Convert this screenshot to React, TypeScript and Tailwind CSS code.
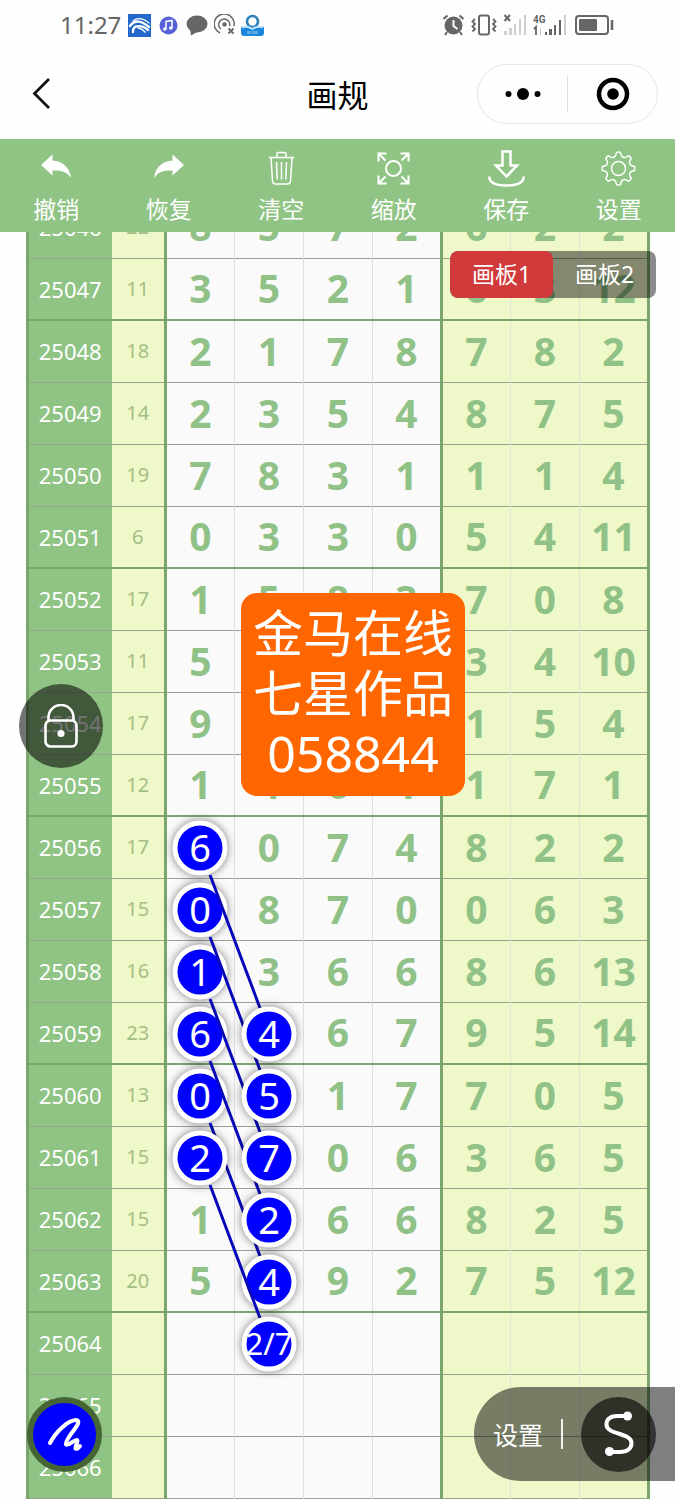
import type { ReactNode } from 'react';

/**
 * Trend chart drawing board
 * ------------------------------------------------------------
 * ▸ Phone status bar + mini program title bar.
 * ▸ Green toolbar (undo, redo, clear, zoom, save, settings).
 * ▸ Draw table with the connected number marks on top.
 * ▸ Floating controls: board switch, lock, pen, line settings.
 */

interface Draw {
  issue: string;
  sum: string;
  main: string[];
  extra: string[];
}

const draws: Draw[] = [
  { issue: '25046', sum: '22', main: ['8', '5', '7', '2'], extra: ['6', '2', '2'] },
  { issue: '25047', sum: '11', main: ['3', '5', '2', '1'], extra: ['6', '3', '12'] },
  { issue: '25048', sum: '18', main: ['2', '1', '7', '8'], extra: ['7', '8', '2'] },
  { issue: '25049', sum: '14', main: ['2', '3', '5', '4'], extra: ['8', '7', '5'] },
  { issue: '25050', sum: '19', main: ['7', '8', '3', '1'], extra: ['1', '1', '4'] },
  { issue: '25051', sum: '6', main: ['0', '3', '3', '0'], extra: ['5', '4', '11'] },
  { issue: '25052', sum: '17', main: ['1', '5', '8', '3'], extra: ['7', '0', '8'] },
  { issue: '25053', sum: '11', main: ['5', '2', '1', '3'], extra: ['3', '4', '10'] },
  { issue: '25054', sum: '17', main: ['9', '4', '2', '2'], extra: ['1', '5', '4'] },
  { issue: '25055', sum: '12', main: ['1', '4', '6', '1'], extra: ['1', '7', '1'] },
  { issue: '25056', sum: '17', main: ['6', '0', '7', '4'], extra: ['8', '2', '2'] },
  { issue: '25057', sum: '15', main: ['0', '8', '7', '0'], extra: ['0', '6', '3'] },
  { issue: '25058', sum: '16', main: ['1', '3', '6', '6'], extra: ['8', '6', '13'] },
  { issue: '25059', sum: '23', main: ['6', '4', '6', '7'], extra: ['9', '5', '14'] },
  { issue: '25060', sum: '13', main: ['0', '5', '1', '7'], extra: ['7', '0', '5'] },
  { issue: '25061', sum: '15', main: ['2', '7', '0', '6'], extra: ['3', '6', '5'] },
  { issue: '25062', sum: '15', main: ['1', '2', '6', '6'], extra: ['8', '2', '5'] },
  { issue: '25063', sum: '20', main: ['5', '4', '9', '2'], extra: ['7', '5', '12'] },
  { issue: '25064', sum: '', main: ['', '', '', ''], extra: ['', '', ''] },
  { issue: '25065', sum: '', main: ['', '', '', ''], extra: ['', '', ''] },
  { issue: '25066', sum: '', main: ['', '', '', ''], extra: ['', '', ''] },
];

// Rows that close a group get the heavy rule
const groupEnds = ['25047', '25051', '25055', '25059', '25063'];

// These cells are covered by a mark, the mark carries the number
const markedCells = [
  '25056-0', '25057-0', '25058-0', '25059-0', '25060-0', '25061-0',
  '25059-1', '25060-1', '25061-1', '25062-1', '25063-1',
];

export default function DrawingBoard() {
  return (
    <div className="relative min-h-screen overflow-hidden bg-[#fefefe] font-['Noto_Sans','Noto_Sans_CJK_SC',sans-serif]">
      <StatusBar />
      <TitleBar />
      <Toolbar />

      {/* Chart */}
      <main className="overflow-hidden">
        <div className="relative -mt-9 ml-[26px] mr-[25px]">
          <DrawTable />
          <Marks />
          <p className="absolute left-[215px] top-[397px] rounded-2xl bg-[#ff6600] px-3 pt-[10px] pb-[13px] text-center text-[50px] leading-[60px] text-white">
            金马在线
            <br />
            七星作品
            <br />
            058844
          </p>
        </div>
      </main>

      {/* Floating controls */}
      <div className="absolute right-[19px] top-[251px] z-20 flex h-[47px] overflow-hidden rounded-lg bg-black/45 text-[23px] text-white">
        <button className="w-[103px] rounded-lg bg-[#d03a3a]">画板1</button>
        <button className="w-[103px]">画板2</button>
      </div>
      <button
        aria-label="锁定"
        className="absolute left-[19px] top-[684px] flex h-[84px] w-[84px] items-center justify-center rounded-full bg-black/55"
      >
        <svg width="34" height="44" viewBox="0 0 34 44" fill="none" stroke="#fff" strokeWidth="2.6">
          <rect x="1.500" y="16.500" width="31" height="26" rx="5" />
          <path d="M4.500 16.500v-3a12.500 12.500 0 0 1 25 0v3" />
          <circle cx="17" cy="29.500" r="3.600" fill="#fff" stroke="none" />
        </svg>
      </button>
      <button
        aria-label="画笔"
        className="absolute left-[27px] top-[1397px] flex h-[75px] w-[75px] items-center justify-center rounded-full border-[6px] border-[#456535] bg-[#0000ff]"
      >
        <svg width="36" height="36" viewBox="0 0 36 36" fill="none" stroke="#fff" strokeWidth="4" strokeLinecap="round" strokeLinejoin="round">
          <path d="M3 26C8 16 20 3.500 29 3c6 .5-1 8.500-5 14-3.500 5-6 9-5 10.500 2 2 9-5.500 11-4.500 2 1.200-2 5-1.500 8.500 1.500 1 3-.5 4.500-2.500" />
        </svg>
      </button>
      <div className="absolute right-0 top-[1387px] flex h-[94px] items-center rounded-l-full bg-black/50 px-[19px] text-white">
        <button className="pt-1 text-[25px]">设置</button>
        <span className="mx-[18px] h-[30px] w-[2px] bg-white/90" />
        <button aria-label="曲线" className="flex h-[75px] w-[75px] items-center justify-center rounded-full bg-black/60">
          <svg width="32" height="46" viewBox="0 0 32 46" fill="none" stroke="#fff" strokeWidth="4">
            <path d="M24 5H14C6.500 5 3.500 9 3.500 13.500c0 10.500 25 8 25 18.500 0 6-4.500 9-11.500 9H6" />
            <circle cx="24.500" cy="5" r="4.500" fill="#fff" stroke="none" />
            <circle cx="6.500" cy="40.500" r="4.500" fill="#fff" stroke="none" />
          </svg>
        </button>
      </div>
    </div>
  );
}

/* ✦ Phone status bar */
function StatusBar() {
  return (
    <header className="flex h-[50px] items-center justify-between px-[60px] text-[#666]">
      <div className="flex items-center">
        <span className="mr-[7px] text-2xl leading-none">11:27</span>
        <svg width="23" height="23" viewBox="0 0 23 23">
          <rect width="23" height="23" fill="#2468cc" />
          <g fill="none" stroke="#fff" strokeLinecap="round">
            <path d="M5 7C10 3 16 5 21 9" strokeWidth="1.200" />
            <path d="M2 12C7 5 14 7 21 13" strokeWidth="2.400" />
            <path d="M5 18c-1-8 10-7 15-2" strokeWidth="2.400" />
            <path d="M10 14c3 0 5 2 7 4" strokeWidth="1.600" />
          </g>
        </svg>
        <svg className="ml-2" width="19" height="19" viewBox="0 0 19 19">
          <circle cx="9.500" cy="9.500" r="9" fill="#5660d8" />
          <path d="M7 13V5.500l6-1V12" fill="none" stroke="#fff" strokeWidth="1.500" />
          <circle cx="5.800" cy="13" r="1.800" fill="#fff" />
          <circle cx="11.800" cy="12" r="1.800" fill="#fff" />
        </svg>
        <svg className="ml-2" width="22" height="21" viewBox="0 0 22 21" fill="#666">
          <ellipse cx="11" cy="9" rx="10.500" ry="8.500" />
          <path d="M4 14l1 6.500 7-4z" />
        </svg>
        <svg className="ml-[6px]" width="22" height="22" viewBox="0 0 22 22" fill="none" stroke="#666" strokeWidth="1.500">
          <path d="M6 19A10 10 0 1 1 20 12M7 15A5.500 5.500 0 1 1 15.500 12" />
          <circle cx="10.500" cy="10.500" r="2.200" fill="#666" stroke="none" />
          <path d="M14.500 14.500l5 5m0-5l-5 5" strokeWidth="1.800" />
        </svg>
        <svg className="ml-[5px]" width="23" height="22" viewBox="0 0 23 22">
          <path d="M0 13l3-1h17l3 1v6q0 3-3 3H3q-3 0-3-3z" fill="#1b86dc" />
          <circle cx="11.500" cy="7.500" r="5.500" fill="#fff" stroke="#2d7fb8" strokeWidth="2.600" />
          <path d="M1 13.500q5-2 10.500 1.500Q17 11.500 22 13.500" fill="none" stroke="#bfe6ff" strokeWidth="2" />
          <path d="M7 17v3m2-3v3m3-3v3m2-3v3m2-3v3" stroke="#9fd4ff" />
        </svg>
      </div>

      <div className="flex items-center">
        <svg width="23" height="22" viewBox="0 0 23 22" fill="none" stroke="#666">
          <circle cx="11.500" cy="11.500" r="9" fill="#666" stroke="none" />
          <path d="M1.500 5l4-3.500m16 3.500l-4-3.500" strokeWidth="2.200" />
          <path d="M5 18l-2 3m15-3l2 3" strokeWidth="2" />
          <path d="M11.500 6v6l4 3" stroke="#fff" strokeWidth="2" />
        </svg>
        <svg className="ml-[6px]" width="26" height="22" viewBox="0 0 26 22" fill="none" stroke="#666" strokeWidth="2">
          <rect x="8" y="1.500" width="10" height="19" rx="2" />
          <path d="M4 5L1.500 7.500 4 10 1.500 12.500 4 15l-2.500 2.500M22 5l2.500 2.500L22 10l2.500 2.500L22 15l2.500 2.500" strokeWidth="1.800" />
        </svg>
        <svg className="ml-[6px]" width="24" height="22" viewBox="0 0 24 22" fill="#cfcfcf">
          <path d="M1 17h3v4H1zM6 14h3v7H6zM11 10h2v11h-2zM16 5h2v16h-2zM21 1h2v20h-2z" />
          <path d="M1.500 1l5.500 6m0-6L1.500 7" fill="none" stroke="#666" strokeWidth="2" />
        </svg>
        <svg className="ml-[6px]" width="34" height="22" viewBox="0 0 34 22" fill="#666">
          <text x="0" y="9" fontSize="10" fontWeight="700" fontFamily="Roboto, sans-serif">4G</text>
          <path d="M3 21v-8l-2 2" fill="none" stroke="#666" strokeWidth="1.800" />
          <path d="M12 18h2v3h-2zM16 15h3v6h-3zM21 11h2v10h-2zM26 6h2v15h-2z" />
          <path d="M31 1h2v20h-2zM7 14h1v7H7z" fill="#cfcfcf" />
        </svg>
        <svg className="ml-[7px]" width="41" height="22" viewBox="0 0 41 22">
          <rect x="2" y="2" width="32" height="18" rx="3" fill="none" stroke="#666" strokeWidth="2" />
          <rect x="5" y="5" width="18" height="12" rx="1" fill="#666" />
          <path d="M38 6v10" stroke="#666" strokeWidth="2.500" />
        </svg>
      </div>
    </header>
  );
}

/* ✦ Title with back button and the mini program capsule */
function TitleBar() {
  return (
    <nav className="grid h-[89px] grid-cols-[1fr_auto_1fr] items-center px-[17px] pb-[2px]">
      <button aria-label="返回" className="w-fit pl-[14px]">
        <svg width="20" height="34" viewBox="0 0 20 34" fill="none" stroke="#111" strokeWidth="2.800">
          <path d="M18 2L3.500 16.500 18 31" />
        </svg>
      </button>
      <h1 className="pt-1 text-[31px] leading-none text-black">画规</h1>
      <div className="flex h-[60px] w-[181px] items-center justify-self-end rounded-full border border-[#e6e6e6]">
        <button aria-label="更多" className="flex flex-1 items-center justify-center">
          <svg width="38" height="14" viewBox="0 0 38 14">
            <circle cx="4.500" cy="7" r="3" />
            <circle cx="19" cy="7" r="6" />
            <circle cx="33.500" cy="7" r="3" />
          </svg>
        </button>
        <span className="h-9 w-px bg-[#e0e0e0]" />
        <button aria-label="关闭" className="flex flex-1 items-center justify-center">
          <svg width="34" height="34" viewBox="0 0 34 34">
            <circle cx="17" cy="17" r="14" fill="none" stroke="#000" strokeWidth="4.500" />
            <circle cx="17" cy="17" r="5.800" />
          </svg>
        </button>
      </div>
    </nav>
  );
}

/* ✦ Green toolbar */
function Toolbar() {
  return (
    <div className="relative z-10 grid h-[93px] grid-cols-6 bg-[#90c484] text-white">
      <Tool label="撤销">
        <path d="M3 15 14.500 4.500v6c9.500.5 17 6 18.500 17.500-4-6-9-8-18.500-7.500v5z" fill="#fff" stroke="none" />
      </Tool>
      <Tool label="恢复">
        <path d="M34 15 22.500 4.500v6c-9.500.5-17 6-18.500 17.500 4-6 9-8 18.500-7.500v5z" fill="#fff" stroke="none" />
      </Tool>
      <Tool label="清空">
        <path d="M6 7.500h25M14 7V3.500q0-1 1-1h7q1 0 1 1V7M8 8l1.500 23q.2 3 3 3h12q2.800 0 3-3L29 8M13.500 12l.7 17.500M18.500 12v17.500M23.500 12l-.7 17.500" strokeWidth="1.500" />
      </Tool>
      <Tool label="缩放">
        <circle cx="18.500" cy="18.500" r="7.500" />
        <path d="M10.500 10.500L3.500 3.500m0 8v-8h8M26.500 10.500l7-7m0 8v-8h-8M10.500 26.500l-7 7m0-8v8h8M26.500 26.500l7 7m0-8v8h-8" />
      </Tool>
      <Tool label="保存">
        <path d="M14.500 1.500h8v14h6.500L18.500 26.500 8 15.500h6.500z" strokeWidth="2.500" />
        <path d="M1.300 26.500c0 6.500 7 9 17.200 9s17.200-2.500 17.200-9" strokeWidth="2.500" />
      </Tool>
      <Tool label="设置">
        <path d={gearPath} strokeWidth="1.500" />
        <circle cx="18.500" cy="18.500" r="7" strokeWidth="1.500" />
      </Tool>
    </div>
  );
}

const gearPath = buildGear(8, 18.5, 16.2, 12.8);

function buildGear(teeth: number, c: number, outer: number, inner: number) {
  const point = (r: number, turn: number) => {
    const a = (turn / teeth) * Math.PI * 2 - Math.PI / 2;
    return `${(c + r * Math.cos(a)).toFixed(2)} ${(c + r * Math.sin(a)).toFixed(2)}`;
  };
  let d = `M${point(outer, -0.15)}`;
  for (let i = 0; i < teeth; i++) {
    d += `Q${point(outer + 0.6, i)} ${point(outer, i + 0.15)}`;
    d += `L${point(inner + 0.9, i + 0.25)}`;
    d += `Q${point(inner - 1.8, i + 0.5)} ${point(inner + 0.9, i + 0.75)}`;
    d += `L${point(outer, i + 0.85)}`;
  }
  return d + 'Z';
}

function Tool({ label, children }: { label: string; children: ReactNode }) {
  return (
    <button className="flex flex-col items-center gap-[6px] pt-[11px]">
      <svg width="37" height="37" viewBox="0 0 37 37" fill="none" stroke="#fff" strokeWidth="2">
        {children}
      </svg>
      <span className="text-[23px] leading-8">{label}</span>
    </button>
  );
}

/* ✦ Draw table */
function DrawTable() {
  return (
    <table className="w-full table-fixed border-collapse border-x-[3px] border-[#7aa56c] text-center">
      <colgroup>
        <col className="w-[84px]" />
        <col className="w-[54px]" />
        <col span={7} />
      </colgroup>
      <tbody>
        {draws.map((d) => (
          <tr
            key={d.issue}
            className={
              groupEnds.includes(d.issue)
                ? 'h-[62px] border-b-2 border-[#7aa56c]'
                : 'h-[62px] border-b border-[#98a390]'
            }
          >
            <th scope="row" className="bg-[#90c484] p-0 text-[22px] font-normal leading-none text-white">
              {d.issue}
            </th>
            <td className="border-r-[3px] border-r-[#7aa56c] bg-[#eef8c8] p-0 text-[20px] leading-none text-[#a5bf85]">
              {d.sum}
            </td>
            {d.main.map((n, i) => (
              <td
                key={i}
                className={
                  i === 3
                    ? 'border-r-[3px] border-r-[#7aa56c] bg-[#fafafb] p-0 pb-[2px] text-[39px] font-bold leading-none text-[#90c287]'
                    : 'border-r border-r-[#dedee2] bg-[#fafafb] p-0 pb-[2px] text-[39px] font-bold leading-none text-[#90c287]'
                }
              >
                {markedCells.includes(`${d.issue}-${i}`) ? '' : n}
              </td>
            ))}
            {d.extra.map((n, i) => (
              <td
                key={i}
                className={
                  i === 2
                    ? 'bg-[#eef8c8] p-0 pb-[2px] text-[39px] font-bold leading-none text-[#90c287]'
                    : 'border-r border-r-[#dfe5d4] bg-[#eef8c8] p-0 pb-[2px] text-[39px] font-bold leading-none text-[#90c287]'
                }
              >
                {n}
              </td>
            ))}
          </tr>
        ))}
      </tbody>
    </table>
  );
}

/* ✦ Number marks and the lines that connect them, painted in drawing order */
const rowY = (row: number) => row * 62 + 32;
const colX = (col: number) => col * 69 + 174;

function Marks() {
  return (
    <svg className="pointer-events-none absolute left-0 top-0" width="300" height="1302" viewBox="0 0 300 1302">
      {['6', '0', '1', '6', '0'].map((n, i) => (
        <Mark key={i} col={0} row={10 + i} text={n} />
      ))}
      {[10, 11, 12, 13, 14].map((row) => (
        <Link key={row} row={row} />
      ))}
      <Mark col={0} row={15} text="2" />
      {['4', '5', '7', '2', '4'].map((n, i) => (
        <Mark key={i} col={1} row={13 + i} text={n} />
      ))}
      <Link row={15} />
      <Mark col={1} row={18} text="2/7" />
    </svg>
  );
}

function Mark({ col, row, text }: { col: number; row: number; text: string }) {
  const x = colX(col);
  const y = rowY(row);
  return (
    <g>
      <circle cx={x} cy={y} r="25" fill="#0000ff" stroke="#fff" strokeWidth="5" className="drop-shadow-[0_0_4px_rgba(0,0,0,0.5)]" />
      <text
        x={x}
        y={text.length > 1 ? y + 11 : y + 14}
        fill="#fff"
        textAnchor="middle"
        fontSize={text.length > 1 ? 31 : 38}
      >
        {text}
      </text>
    </g>
  );
}

function Link({ row }: { row: number }) {
  return (
    <line
      x1={colX(0) + 10}
      y1={rowY(row) + 27}
      x2={colX(1) - 9}
      y2={rowY(row + 3) - 26}
      stroke="#0808b8"
      strokeWidth="3"
    />
  );
}
